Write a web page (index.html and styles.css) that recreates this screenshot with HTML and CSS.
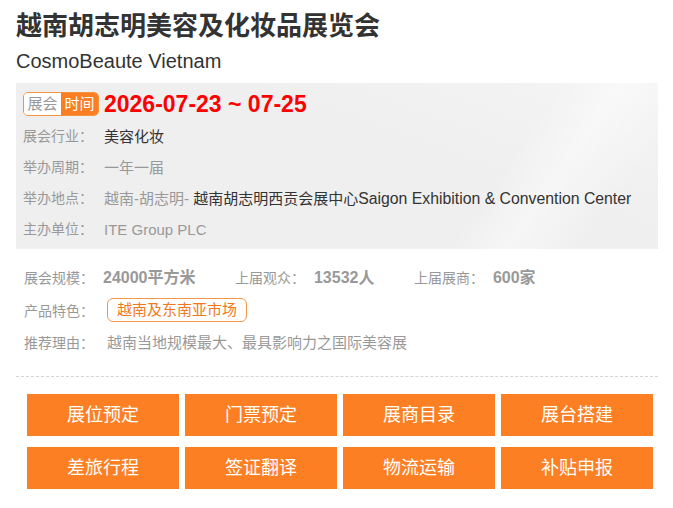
FILE: index.html
```html
<!DOCTYPE html>
<html lang="zh-CN">
<head>
<meta charset="UTF-8">
<meta name="viewport" content="width=device-width, initial-scale=1.0">
<title>越南胡志明美容及化妆品展览会</title>
<link rel="stylesheet" href="styles.css">
</head>
<body>
<div class="wrap">
    <h1 class="title">越南胡志明美容及化妆品展览会</h1>
    <p class="en">CosmoBeaute Vietnam</p>

    <div class="info">
        <div class="date-row">
            <span class="badge"><i>展会</i><b>时间</b></span>
            <span class="date">2026-07-23 ~ 07-25</span>
        </div>
        <p class="row"><span class="lab">展会行业：</span><span class="val dark">美容化妆</span></p>
        <p class="row"><span class="lab">举办周期：</span><span class="val">一年一届</span></p>
        <p class="row"><span class="lab">举办地点：</span><span class="val">越南-胡志明- <em>越南胡志明西贡会展中心<span class="latin">Saigon Exhibition &amp; Convention Center</span></em></span></p>
        <p class="row"><span class="lab">主办单位：</span><span class="val">ITE Group PLC</span></p>
    </div>

    <div class="more">
        <p class="stats">
            <span class="item"><span class="lab">展会规模：</span><strong>24000平方米</strong></span>
            <span class="item"><span class="lab">上届观众：</span><strong>13532人</strong></span>
            <span class="item"><span class="lab">上届展商：</span><strong>600家</strong></span>
        </p>
        <p class="feature"><span class="lab">产品特色：</span><span class="tag">越南及东南亚市场</span></p>
        <p class="reason"><span class="lab">推荐理由：</span><span class="val">越南当地规模最大、最具影响力之国际美容展</span></p>
    </div>

    <div class="btns">
        <a href="#">展位预定</a>
        <a href="#">门票预定</a>
        <a href="#">展商目录</a>
        <a href="#">展台搭建</a>
        <a href="#">差旅行程</a>
        <a href="#">签证翻译</a>
        <a href="#">物流运输</a>
        <a href="#">补贴申报</a>
    </div>
</div>
</body>
</html>
```

FILE: styles.css
```css
*{margin: 0; padding: 0;}
body{
    font-family: "Liberation Sans", "Noto Sans CJK SC", sans-serif;
    color: #333;
    background: #fff;
}
.wrap{
    padding: 8px 15px 0 16px;
}
.title{
    font-size: 26px;
    line-height: 36px;
    font-weight: bold;
    color: #333;
}
.en{
    font-size: 20px;
    line-height: 34px;
    color: #333;
}
.info{
    margin-top: 5px;
    padding: 9px 7px 4px;
    background-color: #efefef;
    background-image:
        linear-gradient(125deg, rgba(255,255,255,0) 72%, rgba(255,255,255,.45) 80%, rgba(255,255,255,0) 90%),
        linear-gradient(200deg, rgba(255,255,255,.35) 0, rgba(255,255,255,0) 40%);
}
.date-row{
    display: flex;
    align-items: center;
    height: 24px;
    margin-bottom: 5px;
}
.badge{
    display: flex;
    height: 22px;
    border: 1px solid #f7913d;
    border-radius: 5px;
    overflow: hidden;
    font-size: 15px;
    line-height: 22px;
}
.badge i, .badge b{
    width: 37px;
    text-align: center;
    font-style: normal;
    font-weight: normal;
}
.badge i{
    background: #fff;
    color: #999;
}
.badge b{
    background: #fb7e22;
    color: #fff;
}
.date{
    margin-left: 5px;
    font-size: 23px;
    font-weight: bold;
    color: #f00;
}
.row{
    display: flex;
    line-height: 31px;
}
.lab{
    font-size: 14px;
    color: #999;
}
.row .lab{
    width: 81px;
}
.val{
    font-size: 15px;
    color: #999;
}
.val.dark, .val em{
    color: #333;
    font-style: normal;
}
.latin{
    font-size: 15.8px;
}
.more{
    padding: 13px 0 16px 8px;
    border-bottom: 1px dashed #d6d6d6;
}
.stats{
    line-height: 32px;
}
.stats .item{
    margin-right: 35px;
}
.stats strong{
    margin-left: 9px;
    font-size: 16px;
    color: #999;
}
.feature{
    display: flex;
    align-items: center;
    height: 32px;
}
.feature .lab, .reason .lab{
    width: 83px;
}
.tag{
    height: 22px;
    line-height: 22px;
    padding: 0 9px;
    border: 1px solid #f3964a;
    border-radius: 6px;
    font-size: 15px;
    color: #f0781e;
}
.reason{
    display: flex;
    line-height: 34px;
}
.btns{
    display: grid;
    grid-template-columns: repeat(4, 152px);
    gap: 11px 6px;
    margin: 17px 0 0 11px;
}
.btns a{
    display: block;
    height: 42px;
    line-height: 42px;
    text-align: center;
    background: #fd7f23;
    color: #fff;
    font-size: 18px;
    text-decoration: none;
}
```
